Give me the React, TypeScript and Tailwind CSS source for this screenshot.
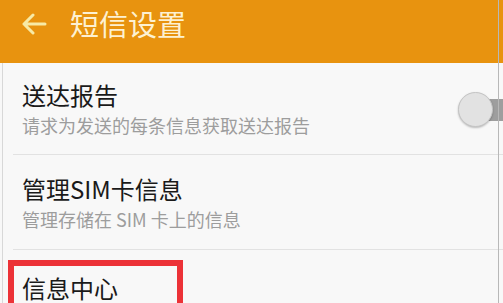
import React from "react";

const font = { fontFamily: '"Noto Sans CJK SC", "Noto Sans", sans-serif' };

export default function App() {
  return (
    <div className="relative w-[503px] h-[303px] overflow-hidden bg-[#f8f8f8]" style={font}>
      <div className="h-[63px] bg-[#e8930f] flex items-start pt-[6px]">
        <svg width="26" height="22" viewBox="0 0 26 22" className="ml-[21px] mt-[7px]">
          <path d="M24 11H3M12 2L3 11l9 9" fill="none" stroke="#f7eaa6" strokeWidth="3" strokeLinecap="round" strokeLinejoin="round" />
        </svg>
        <div className="ml-[23px] text-[29px] leading-[34px] text-[#fdf1d2]">短信设置</div>
      </div>

      <div className="flex items-start h-[92px] border-b border-[#e2e2e2] ml-[13px]">
        <div className="flex-1 pl-[9px] pt-[17px]">
          <div className="text-[24px] leading-[30px] text-[#1a1a1a]">送达报告</div>
          <div className="text-[18px] leading-[24px] text-[#9d9d9d] mt-[3px]">请求为发送的每条信息获取送达报告</div>
        </div>
        <div className="relative w-[45px] h-[36px] mt-[29px] shrink-0">
          <div className="absolute left-[18px] top-[7px] w-[40px] h-[22px] bg-[#9e9e9e]" />
          <div className="absolute left-0 top-0 w-[35px] h-[35px] rounded-full bg-[#e2e2e2] border border-[#c4c4c4] shadow-[0_1px_2px_rgba(0,0,0,0.25)]" />
        </div>
      </div>

      <div className="h-[95px] border-b border-[#e2e2e2] ml-[13px] pl-[9px] pt-[19px]">
        <div className="text-[24px] leading-[30px] text-[#1a1a1a]">管理SIM卡信息</div>
        <div className="text-[18px] leading-[24px] text-[#9d9d9d] mt-[3px]">管理存储在 SIM 卡上的信息</div>
      </div>

      <div className="ml-[8px] mt-[10px] w-[175px] h-[60px] border-[6px] border-[#ec3237] pl-[8px] pt-[7px]">
        <div className="text-[24px] leading-[30px] text-[#1a1a1a]">信息中心</div>
      </div>

      <div className="absolute left-[2px] top-[63px] bottom-0 w-px bg-[#d8d8d8]" />
      <div className="absolute left-[498px] top-0 bottom-0 w-px bg-[#b8b8b8]" />
    </div>
  );
}
